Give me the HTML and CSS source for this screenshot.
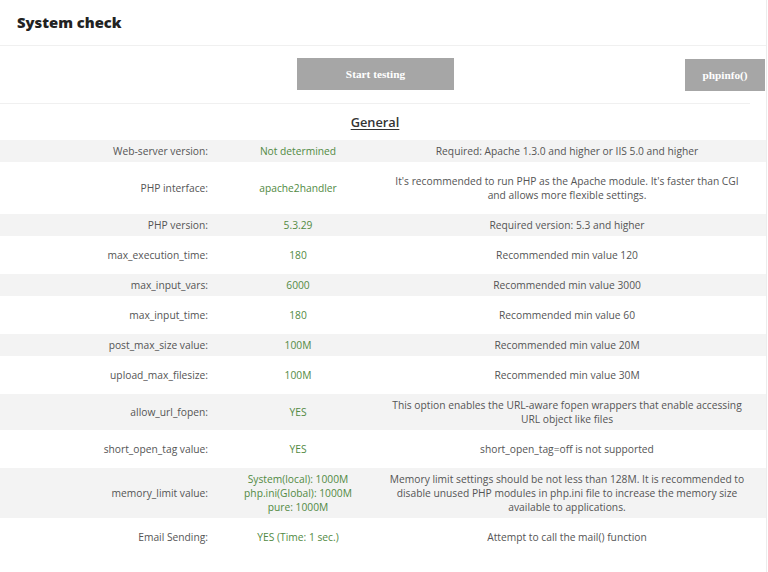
FILE: index.html
```html
<!DOCTYPE html>
<html>
<head>
<meta charset="utf-8">
<link rel="stylesheet" href="styles.css">
</head>
<body>
<div class="page">
  <header class="header">
    <h1 class="title">System check</h1>
  </header>
  <div class="actions">
    <button class="btn btn-start">Start testing</button>
    <button class="btn btn-info">phpinfo()</button>
  </div>
  <h2 class="section">General</h2>
  <div class="table">
    <div class="row odd"><div class="label">Web-server version:</div><div class="value">Not determined</div><div class="desc">Required: Apache 1.3.0 and higher or IIS 5.0 and higher</div></div>
    <div class="row even"><div class="label">PHP interface:</div><div class="value">apache2handler</div><div class="desc">It's recommended to run PHP as the Apache module. It's faster than CGI and allows more flexible settings.</div></div>
    <div class="row odd"><div class="label">PHP version:</div><div class="value">5.3.29</div><div class="desc">Required version: 5.3 and higher</div></div>
    <div class="row even"><div class="label">max_execution_time:</div><div class="value">180</div><div class="desc">Recommended min value 120</div></div>
    <div class="row odd"><div class="label">max_input_vars:</div><div class="value">6000</div><div class="desc">Recommended min value 3000</div></div>
    <div class="row even"><div class="label">max_input_time:</div><div class="value">180</div><div class="desc">Recommended min value 60</div></div>
    <div class="row odd"><div class="label">post_max_size value:</div><div class="value">100M</div><div class="desc">Recommended min value 20M</div></div>
    <div class="row even"><div class="label">upload_max_filesize:</div><div class="value">100M</div><div class="desc">Recommended min value 30M</div></div>
    <div class="row odd"><div class="label">allow_url_fopen:</div><div class="value">YES</div><div class="desc">This option enables the URL-aware fopen wrappers that enable accessing URL object like files</div></div>
    <div class="row even"><div class="label">short_open_tag value:</div><div class="value">YES</div><div class="desc">short_open_tag=off is not supported</div></div>
    <div class="row odd"><div class="label">memory_limit value:</div><div class="value">System(local): 1000M<br>php.ini(Global): 1000M<br>pure: 1000M</div><div class="desc">Memory limit settings should be not less than 128M. It is recommended to disable unused PHP modules in php.ini file to increase the memory size available to applications.</div></div>
    <div class="row even"><div class="label">Email Sending:</div><div class="value">YES (Time: 1 sec.)</div><div class="desc">Attempt to call the mail() function</div></div>
  </div>
</div>
</body>
</html>
```
FILE: styles.css
```css
html, body {
  margin: 0;
  padding: 0;
  background: #fff;
}
body {
  font-family: "Open Sans", "Liberation Sans", sans-serif;
  font-size: 10.25px;
  line-height: 14px;
  color: #555;
}
.page {
  width: 766px;
  border-right: 1px solid #ececec;
  min-height: 572px;
}
.header {
  height: 45px;
  border-bottom: 1px solid #f0f0f0;
  display: flex;
  align-items: center;
  padding-left: 17px;
}
.title {
  margin: 0;
  font-size: 14.8px;
  font-weight: 800;
  color: #222;
  padding-bottom: 1px;
}
.actions {
  width: 750px;
  height: 57px;
  border-bottom: 1px solid #f0f0f0;
  display: flex;
  align-items: center;
}
.btn {
  border: none;
  background: #a6a6a6;
  color: #fff;
  font-family: "Liberation Serif", serif;
  font-weight: bold;
  font-size: 11.3px;
  padding: 0;
}
.btn-start {
  width: 157px;
  height: 32px;
  margin-left: 297px;
  margin-top: -1px;
}
.btn-info {
  width: 80px;
  height: 32px;
  margin-left: auto;
  margin-right: -15px;
  margin-top: 1px;
}
.section {
  width: 750px;
  margin: 0;
  height: 36px;
  display: flex;
  align-items: center;
  justify-content: center;
  font-size: 12.8px;
  font-weight: 600;
  color: #333;
  text-decoration: underline;
  text-underline-offset: 2px;
}
.table {
  width: 766px;
}
.row {
  display: grid;
  grid-template-columns: 218px 160px 388px;
  align-items: center;
}
.row.odd {
  background: #f3f3f3;
  padding: 4px 0;
}
.row.even {
  padding: 12px 0;
}
.label {
  text-align: right;
  padding-right: 10px;
}
.value {
  text-align: center;
  color: #528a43;
}
.desc {
  text-align: center;
  padding: 0 21px 0 11px;
}
```
